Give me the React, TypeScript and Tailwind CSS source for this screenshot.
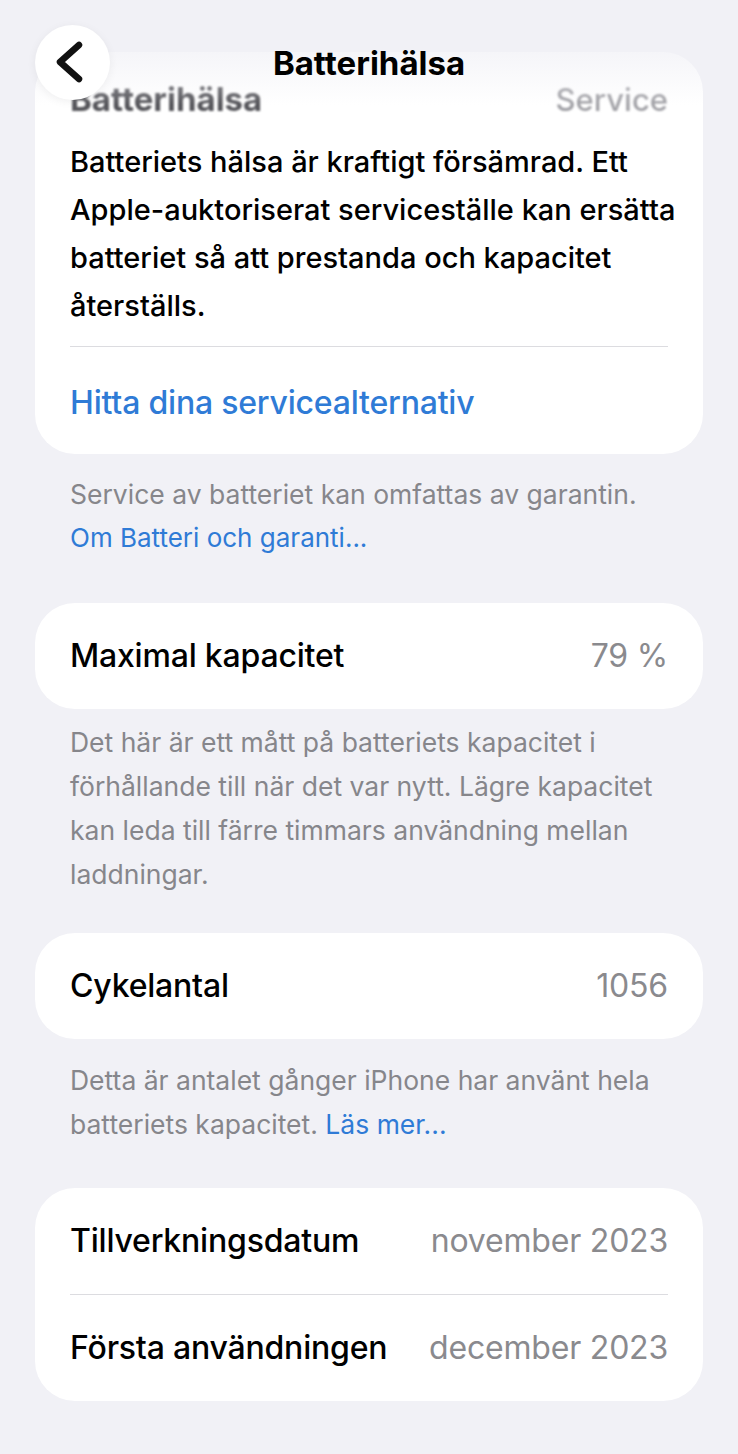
const font = "font-['Inter','Noto_Sans',sans-serif]";

function Row({ label, value }: { label: string; value: string }) {
  return (
    <div className="flex h-[106px] items-center justify-between">
      <span className="text-[32px] font-medium text-black tracking-[-0.2px]">{label}</span>
      <span className="text-[32px] text-[#8a8a8e] tracking-[-0.2px]">{value}</span>
    </div>
  );
}

function Note({ lines, link }: { lines: string[]; link?: string }) {
  return (
    <div className="px-[70px] text-[26.5px] leading-[44px] text-[#86868b]">
      {lines.map((l, i) => (
        <div key={i} className="whitespace-nowrap">
          {l}
          {link && i === lines.length - 1 && <span className="text-[#2f7bd6]"> {link}</span>}
        </div>
      ))}
    </div>
  );
}

export default function App() {
  return (
    <div className={`relative w-[738px] min-h-[1454px] overflow-hidden bg-[#f1f1f6] ${font}`}>
      {/* nav bar over the scrolled content */}
      <div className="absolute inset-x-0 top-0 z-10 h-[105px] bg-gradient-to-b from-[#f1f1f6] via-[#f1f1f6]/70 to-transparent" />
      <div className="absolute left-[35px] top-[25px] z-20 h-[75px] w-[75px] rounded-full bg-white shadow-[0_2px_10px_rgba(0,0,0,0.06)]">
        <svg viewBox="0 0 75 75" className="h-[75px] w-[75px]">
          <polyline points="44,20 25,37 44,54" fill="none" stroke="#111" strokeWidth="6.5" strokeLinecap="round" strokeLinejoin="round" />
        </svg>
      </div>
      <div className="absolute inset-x-0 top-[41px] z-20 text-center text-[33px] font-bold leading-[44px] text-black">
        Batterihälsa
      </div>

      <div className="pt-[52px]">
        {/* card 1 */}
        <div className="mx-[35px] rounded-[40px] bg-white px-[35px] pt-[28px] pb-[31px]">
          <div className="flex h-[40px] items-center justify-between blur-[1.2px]">
            <span className="text-[33px] font-bold text-[#55555a]">Batterihälsa</span>
            <span className="text-[31px] font-medium text-[#a0a0a5]">Service</span>
          </div>
          <div className="mt-[18px] text-[29px] font-medium leading-[48px] text-black">
            <div className="whitespace-nowrap">Batteriets hälsa är kraftigt försämrad. Ett</div>
            <div className="whitespace-nowrap">Apple-auktoriserat serviceställe kan ersätta</div>
            <div className="whitespace-nowrap">batteriet så att prestanda och kapacitet</div>
            <div className="whitespace-nowrap">återställs.</div>
          </div>
          <div className="mt-[16px] h-px bg-[#dcdce0]" />
          <div className="mt-[36px] text-[32px] font-medium leading-[40px] text-[#2f7bd6] tracking-[-0.2px]">
            Hitta dina servicealternativ
          </div>
        </div>

        <div className="mt-[18px]">
          <Note lines={["Service av batteriet kan omfattas av garantin."]} />
          <div className="px-[70px] text-[26px] leading-[44px] text-[#2f7bd6]">
            Om Batteri och garanti...
          </div>
        </div>

        {/* card 2 */}
        <div className="mx-[35px] mt-[43px] rounded-[40px] bg-white px-[35px]">
          <Row label="Maximal kapacitet" value="79 %" />
        </div>
        <div className="mt-[11px]">
          <Note
            lines={[
              "Det här är ett mått på batteriets kapacitet i",
              "förhållande till när det var nytt. Lägre kapacitet",
              "kan leda till färre timmars användning mellan",
              "laddningar.",
            ]}
          />
        </div>

        {/* card 3 */}
        <div className="mx-[35px] mt-[37px] rounded-[40px] bg-white px-[35px]">
          <Row label="Cykelantal" value="1056" />
        </div>
        <div className="mt-[19px]">
          <Note
            lines={["Detta är antalet gånger iPhone har använt hela", "batteriets kapacitet."]}
            link="Läs mer..."
          />
        </div>

        {/* card 4 */}
        <div className="mx-[35px] mt-[42px] rounded-[40px] bg-white pl-[35px]">
          <div className="pr-[35px]">
            <Row label="Tillverkningsdatum" value="november 2023" />
          </div>
          <div className="h-px bg-[#dcdce0] mr-[35px]" />
          <div className="pr-[35px]">
            <Row label="Första användningen" value="december 2023" />
          </div>
        </div>
      </div>
    </div>
  );
}
